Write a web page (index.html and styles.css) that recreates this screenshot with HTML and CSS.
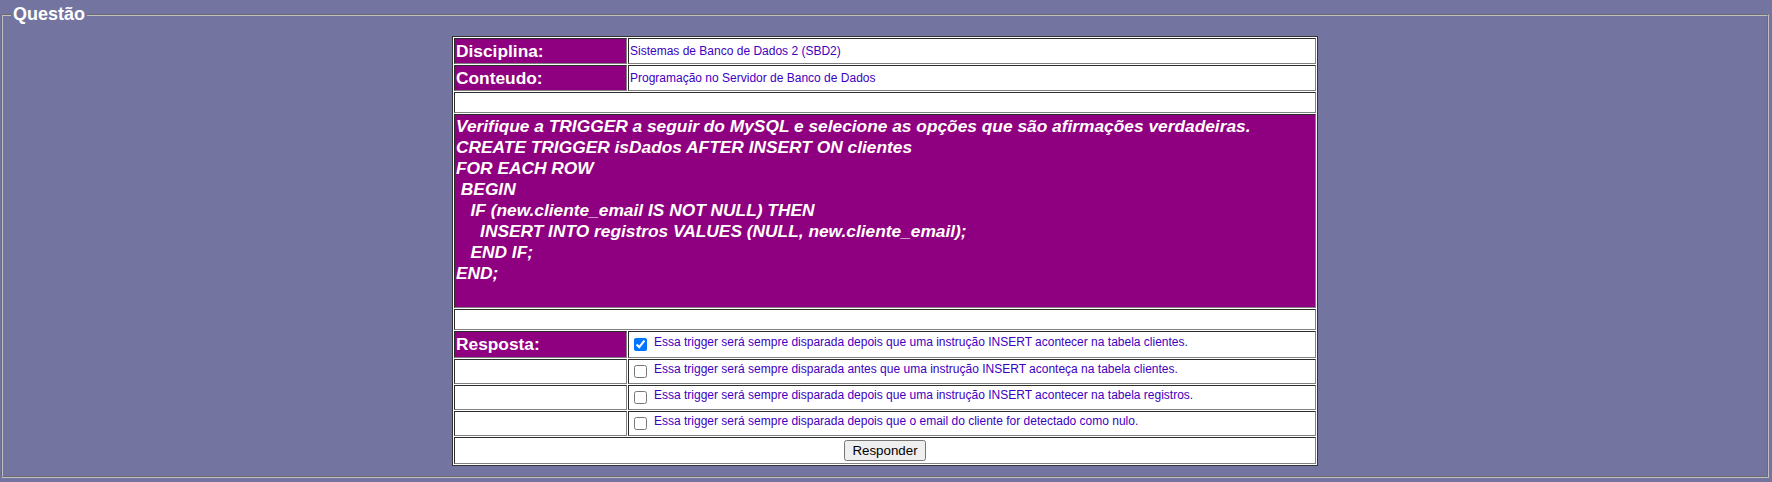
FILE: index.html
```html
<!DOCTYPE html>
<html lang="pt-BR">
<head>
<meta charset="utf-8">
<title>Questão</title>
<link rel="stylesheet" href="styles.css">
</head>
<body>
<fieldset class="q-box">
  <legend class="q-legend">Questão</legend>
  <table class="q-table">
    <tr class="r-info">
      <td class="lbl">Disciplina:</td>
      <td class="val">Sistemas de Banco de Dados 2 (SBD2)</td>
    </tr>
    <tr class="r-info">
      <td class="lbl">Conteudo:</td>
      <td class="val">Programação no Servidor de Banco de Dados</td>
    </tr>
    <tr class="r-sp"><td colspan="2"></td></tr>
    <tr class="r-q">
      <td colspan="2" class="enun"><div class="code">Verifique a TRIGGER a seguir do MySQL e selecione as opções que são afirmações verdadeiras.
CREATE TRIGGER isDados AFTER INSERT ON clientes
FOR EACH ROW
 BEGIN
   IF (new.cliente_email IS NOT NULL) THEN
     INSERT INTO registros VALUES (NULL, new.cliente_email);
   END IF;
END;</div></td>
    </tr>
    <tr class="r-sp"><td colspan="2"></td></tr>
    <tr class="r-resp">
      <td class="lbl">Resposta:</td>
      <td class="opt"><label class="opt-line"><input type="checkbox" checked><span class="opt-txt">Essa trigger será sempre disparada depois que uma instrução INSERT acontecer na tabela clientes.</span></label></td>
    </tr>
    <tr class="r-opt">
      <td class="blank"></td>
      <td class="opt"><label class="opt-line"><input type="checkbox"><span class="opt-txt">Essa trigger será sempre disparada antes que uma instrução INSERT aconteça na tabela clientes.</span></label></td>
    </tr>
    <tr class="r-opt">
      <td class="blank"></td>
      <td class="opt"><label class="opt-line"><input type="checkbox"><span class="opt-txt">Essa trigger será sempre disparada depois que uma instrução INSERT acontecer na tabela registros.</span></label></td>
    </tr>
    <tr class="r-opt">
      <td class="blank"></td>
      <td class="opt"><label class="opt-line"><input type="checkbox"><span class="opt-txt">Essa trigger será sempre disparada depois que o email do cliente for detectado como nulo.</span></label></td>
    </tr>
    <tr class="r-btn">
      <td colspan="2" class="btn-cell"><button type="button" class="btn">Responder</button></td>
    </tr>
  </table>
</fieldset>
</body>
</html>
```

FILE: styles.css
```css
html {
  background: #7375a0;
}
body {
  margin: 0;
  padding: 4px 3px 0 1px;
  font-family: "Liberation Sans", Arial, sans-serif;
}
.q-box {
  margin: 0;
  padding: 11px 8px 10px 8px;
  border: 2px groove #c0c0c0;
}
.q-legend {
  padding: 0 2px;
  color: #ffffff;
  font: bold 18px "Liberation Sans", Arial, sans-serif;
}
.q-table {
  width: 866px;
  margin: 0 auto;
  border-collapse: separate;
  border-spacing: 1px;
  border: 1px solid #333333;
  background: #ffffff;
}
.q-table td {
  padding: 1px;
  border: 1px inset gray;
}
.r-info { height: 26px; }
.r-sp { height: 21px; }
.r-q { height: 194px; }
.r-resp { height: 27px; }
.r-opt { height: 25px; }
.r-btn { height: 27px; }

.lbl {
  width: 169px;
  background: #8f0080;
  color: #ffffff;
  font: bold 13pt "Liberation Sans", Arial, sans-serif;
}
.val {
  color: #4000c0;
  font-size: 12px;
}
.enun {
  background: #8f0080;
  vertical-align: top;
}
.code {
  white-space: pre;
  color: #ffffff;
  font: italic bold 13pt/21px "Liberation Sans", Arial, sans-serif;
}
.opt-line {
  display: flex;
  align-items: flex-start;
}
.opt-line input {
  margin: 3px 3px 3px 4px;
}
.opt-txt {
  padding-left: 4px;
  color: #4000c0;
  font-size: 12px;
  line-height: 14px;
}
.btn-cell {
  text-align: center;
}
.btn {
  font: 13.333px "Liberation Sans", Arial, sans-serif;
}
```
